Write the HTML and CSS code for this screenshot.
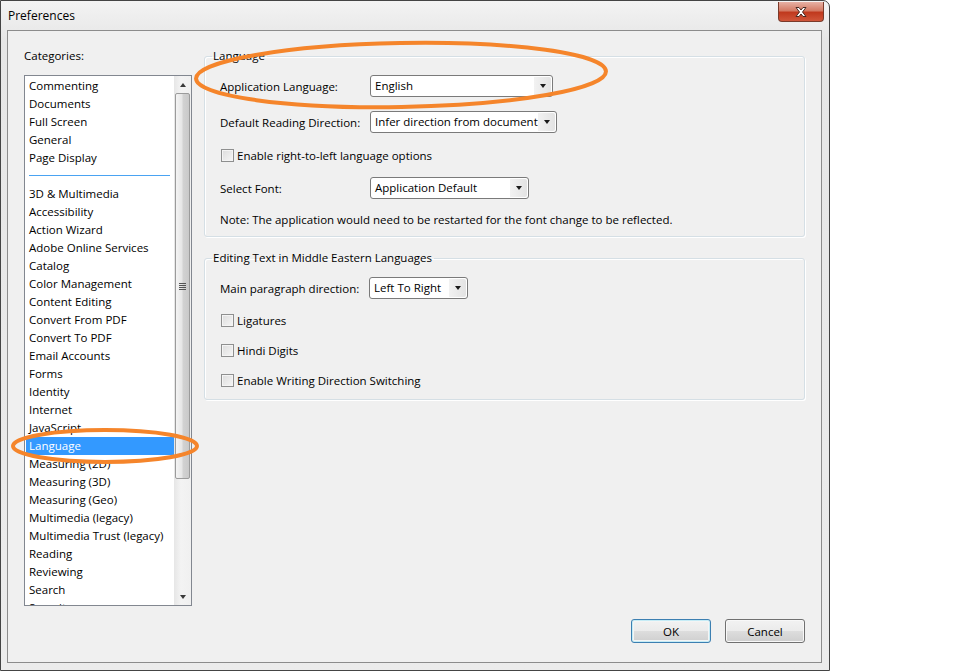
FILE: index.html
```html
<!DOCTYPE html>
<html>
<head>
<meta charset="utf-8">
<title>Preferences</title>
<link rel="stylesheet" href="styles.css">
</head>
<body>
<div class="dialog">
  <div class="titlebar">
    <span class="title">Preferences</span>
    <div class="close"><svg width="18" height="12" viewBox="0 0 18 12"><path d="M4 1.5h3l2 2.5 2-2.5h3l-3.5 4.5 3.5 4.5h-3l-2-2.5-2 2.5h-3l3.5-4.5z" fill="#fff" stroke="#4a2a22" stroke-width="1"/></svg></div>
  </div>
  <div class="client">
    <div class="main">
      <div class="leftcol">
        <div class="cat-label">Categories:</div>
        <div class="listbox">
          <div class="items">
            <div class="item">Commenting</div>
            <div class="item">Documents</div>
            <div class="item">Full Screen</div>
            <div class="item">General</div>
            <div class="item">Page Display</div>
            <div class="sep"><span class="sep-line"></span></div>
            <div class="item">3D &amp; Multimedia</div>
            <div class="item">Accessibility</div>
            <div class="item">Action Wizard</div>
            <div class="item">Adobe Online Services</div>
            <div class="item">Catalog</div>
            <div class="item">Color Management</div>
            <div class="item">Content Editing</div>
            <div class="item">Convert From PDF</div>
            <div class="item">Convert To PDF</div>
            <div class="item">Email Accounts</div>
            <div class="item">Forms</div>
            <div class="item">Identity</div>
            <div class="item">Internet</div>
            <div class="item">JavaScript</div>
            <div class="item selected">Language</div>
            <div class="item">Measuring (2D)</div>
            <div class="item">Measuring (3D)</div>
            <div class="item">Measuring (Geo)</div>
            <div class="item">Multimedia (legacy)</div>
            <div class="item">Multimedia Trust (legacy)</div>
            <div class="item">Reading</div>
            <div class="item">Reviewing</div>
            <div class="item">Search</div>
            <div class="item">Security</div>
          </div>
          <div class="scrollbar">
            <div class="sb-btn"><span class="tri-up"></span></div>
            <div class="sb-track">
              <div class="thumb"><span class="grip"></span></div>
            </div>
            <div class="sb-btn"><span class="tri-down"></span></div>
          </div>
        </div>
      </div>
      <div class="rightcol">
        <fieldset class="group g1">
          <legend>Language</legend>
          <div class="row">
            <span class="label">Application Language:</span>
            <div class="combo w183"><span class="val">English</span><span class="arrow"><span class="tri-down"></span></span></div>
          </div>
          <div class="row r-2">
            <span class="label">Default Reading Direction:</span>
            <div class="combo w187"><span class="val">Infer direction from document</span><span class="arrow"><span class="tri-down"></span></span></div>
          </div>
          <div class="row r-3">
            <span class="check"></span><span class="ctext">Enable right-to-left language options</span>
          </div>
          <div class="row r-3">
            <span class="label">Select Font:</span>
            <div class="combo w159"><span class="val">Application Default</span><span class="arrow"><span class="tri-down"></span></span></div>
          </div>
          <div class="note">Note: The application would need to be restarted for the font change to be reflected.</div>
        </fieldset>
        <fieldset class="group g2">
          <legend>Editing Text in Middle Eastern Languages</legend>
          <div class="row">
            <span class="label l149">Main paragraph direction:</span>
            <div class="combo w99"><span class="val">Left To Right</span><span class="arrow"><span class="tri-down"></span></span></div>
          </div>
          <div class="crow c-first"><span class="check"></span><span class="ctext">Ligatures</span></div>
          <div class="crow"><span class="check"></span><span class="ctext">Hindi Digits</span></div>
          <div class="crow"><span class="check"></span><span class="ctext">Enable Writing Direction Switching</span></div>
        </fieldset>
      </div>
    </div>
    <div class="buttons">
      <div class="btn default">OK</div>
      <div class="btn">Cancel</div>
    </div>
  </div>
</div>
<svg class="marks" width="960" height="671" viewBox="0 0 960 671">
  <ellipse cx="401" cy="75" rx="205" ry="32" transform="rotate(-1 401 75)" fill="none" stroke="#f5852b" stroke-width="4"/>
  <ellipse cx="105" cy="446" rx="92" ry="16" fill="none" stroke="#f5852b" stroke-width="4"/>
</svg>
</body>
</html>
```
FILE: styles.css
```css
* { box-sizing: border-box; }
html, body { margin: 0; padding: 0; background: #fff; }
body {
  font-family: "Open Sans", "Noto Sans", sans-serif;
  font-size: 11.5px;
  color: #000;
  width: 960px;
  height: 671px;
  position: relative;
  overflow: hidden;
}
.dialog {
  width: 830px;
  height: 671px;
  border: 1px solid #444;
  border-radius: 0 7px 0 0;
  background: linear-gradient(#f3f3f3, #e6e6e6 40px, #ececec);
  display: flex;
  flex-direction: column;
  padding: 0 7px 7px 6px;
}
.titlebar {
  height: 29px;
  display: flex;
  align-items: flex-start;
  justify-content: space-between;
}
.title {
  margin-top: 7px;
  margin-left: 1px;
  line-height: 16px;
  font-size: 12px;
}
.close {
  width: 46px;
  height: 20px;
  margin-top: 1px;
  margin-right: -2px;
  border: 1px solid #7a3a2a;
  border-top: none;
  border-radius: 0 0 4px 4px;
  background: linear-gradient(#e7b1a4, #d47b65 45%, #c0391e 55%, #d0563a);
  display: flex;
  align-items: center;
  justify-content: center;
}
.client {
  flex: 1;
  border: 1px solid #8c8c8c;
  background: #f0f0f0;
  display: flex;
  flex-direction: column;
  padding: 17px 16px 19px 16px;
}
.main {
  display: flex;
  gap: 12px;
}
.leftcol { width: 168px; }
.cat-label { line-height: 16px; margin-bottom: 11px; }
.listbox {
  height: 531px;
  border: 1px solid #828790;
  background: #fff;
  display: flex;
}
.items {
  flex: 1;
  overflow: hidden;
  padding-top: 1px;
}
.item {
  height: 18px;
  line-height: 18px;
  padding-left: 4px;
  white-space: nowrap;
}
.item.selected {
  background: #3399ff;
  color: #fff;
  margin-left: 1px;
  padding-left: 3px;
}
.sep {
  height: 18px;
  padding: 8px 4px 0 4px;
}
.sep-line {
  display: block;
  height: 1px;
  background: #4aa3f2;
}
.scrollbar {
  width: 17px;
  display: flex;
  flex-direction: column;
  background: linear-gradient(90deg, #e6e6e6, #f3f3f3 40%, #f0f0f0);
}
.sb-btn {
  height: 17px;
  display: flex;
  align-items: center;
  justify-content: center;
}
.sb-track { flex: 1; }
.thumb {
  height: 386px;
  margin: 0 1px;
  border: 1px solid #9b9b9b;
  border-radius: 2px;
  background: linear-gradient(90deg, #f4f4f4, #e6e6e6 45%, #d2d2d2 55%, #c9c9c9);
  display: flex;
  align-items: center;
  justify-content: center;
}
.grip {
  width: 7px;
  height: 7px;
  background: repeating-linear-gradient(#555 0 1px, transparent 1px 2px);
}
.tri-up, .tri-down {
  width: 0;
  height: 0;
  border-left: 3.5px solid transparent;
  border-right: 3.5px solid transparent;
}
.tri-up { border-bottom: 4px solid #3a3a3a; }
.tri-down { border-top: 4px solid #1a1a1a; }
.sb-btn .tri-down { border-top-color: #3a3a3a; }
.rightcol { width: 601px; }
.group {
  margin: 0;
  padding: 0 0 0 15px;
  border: 1px solid #d5dfe5;
  border-radius: 3px;
  box-shadow: inset 1px 1px 0 #fff, 1px 1px 0 #fff;
}
.group legend {
  padding: 0 2px 0 1px;
  margin-left: -8px;
  line-height: 16px;
}
.g1 { padding-bottom: 8px; padding-top: 11px; }
.g2 { margin-top: 13px; padding-top: 11px; padding-bottom: 11px; }
.row {
  display: flex;
  align-items: center;
  height: 22px;
}
.r-2 { margin-top: 14px; }
.r-3 { margin-top: 11px; }
.label { width: 150px; }
.label.l149 { width: 149px; }
.combo {
  height: 22px;
  border: 1px solid #7a7a7a;
  border-radius: 3px;
  background: #fff;
  display: flex;
  padding: 1px;
}
.combo .val {
  flex: 1;
  padding-left: 3px;
  line-height: 18px;
  white-space: nowrap;
  overflow: hidden;
}
.combo .arrow {
  width: 17px;
  display: flex;
  align-items: center;
  justify-content: center;
  background: linear-gradient(90deg, #f2f2f2, #e3e3e3);
  border-radius: 0 2px 2px 0;
}
.w183 { width: 183px; }
.w187 { width: 187px; }
.w159 { width: 159px; }
.w99 { width: 99px; }
.check {
  width: 13px;
  height: 13px;
  border: 1px solid #8e8f8f;
  background: linear-gradient(135deg, #dcdcdc, #f6f6f6);
  box-shadow: inset 0 0 0 1px #f4f4f4;
  margin-left: 1px;
  margin-right: 3px;
}
.note { margin-top: 13px; line-height: 16px; }
.crow {
  display: flex;
  align-items: center;
  height: 16px;
  margin-top: 14px;
}
.crow.c-first { margin-top: 13px; }
.buttons {
  margin-top: auto;
  display: flex;
  justify-content: flex-end;
  gap: 14px;
}
.btn {
  width: 80px;
  height: 24px;
  border: 1px solid #707070;
  border-radius: 3px;
  background: linear-gradient(#f2f2f2, #ebebeb 50%, #dddddd 51%, #cfcfcf);
  box-shadow: inset 0 0 0 1px #f8f8f8;
  display: flex;
  align-items: center;
  justify-content: center;
}
.btn.default {
  border-color: #3c7fb1;
  box-shadow: inset 0 0 0 1px #48d5fd44, inset 0 0 0 2px #f4f4f4;
}
.marks {
  position: absolute;
  left: 0;
  top: 0;
  pointer-events: none;
}
```
